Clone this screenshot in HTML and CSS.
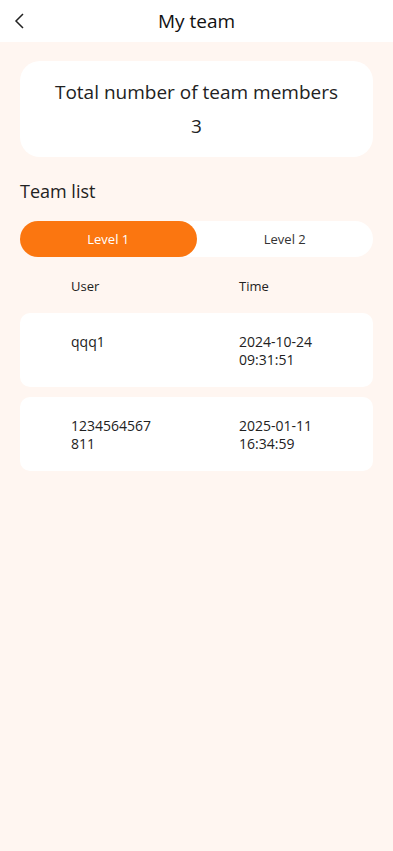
FILE: index.html
```html
<!DOCTYPE html>
<html lang="en">
<head>
    <meta charset="UTF-8">
    <meta name="viewport" content="width=device-width, initial-scale=1.0">
    <title>My team</title>
    <link rel="stylesheet" href="styles.css">
</head>
<body>
    <!-- Cabecera -->
    <div class="nav-bar">
        <span class="back">
            <svg width="12" height="18" viewBox="0 0 12 18"><path d="M9 2 L2 9 L9 16" fill="none" stroke="#222" stroke-width="1.5"/></svg>
        </span>
        <h1>My team</h1>
    </div>

    <div class="page">
        <div class="total-card">
            <p class="total-label">Total number of team members</p>
            <p class="total-num">3</p>
        </div>

        <h2 class="section-title">Team list</h2>

        <div class="tabs">
            <div class="tab active">Level 1</div>
            <div class="tab">Level 2</div>
        </div>

        <div class="list-head">
            <span class="col-user">User</span>
            <span class="col-time">Time</span>
        </div>

        <div class="row">
            <span class="col-user">qqq1</span>
            <span class="col-time">2024-10-24 09:31:51</span>
        </div>
        <div class="row">
            <span class="col-user">1234564567811</span>
            <span class="col-time">2025-01-11 16:34:59</span>
        </div>
    </div>
</body>
</html>
```

FILE: styles.css
```css
/* Estilo general */
body {
    margin: 0;
    font-family: "Open Sans", "Noto Sans", sans-serif;
    background: #fff6f1;
    color: #222;
    min-height: 100vh;
}

/* Cabecera */
.nav-bar {
    background: #fff;
    height: 42px;
    display: flex;
    align-items: center;
    justify-content: center;
    position: relative;
}

.nav-bar h1 {
    margin: 0;
    font-size: 19px;
    font-weight: 400;
    color: #111;
}

.back {
    position: absolute;
    left: 14px;
    top: 12px;
    display: flex;
}

.page {
    padding: 19px 20px;
}

/* Tarjeta total */
.total-card {
    background: #fff;
    border-radius: 20px;
    height: 96px;
    display: flex;
    flex-direction: column;
    align-items: center;
    justify-content: center;
    gap: 8px;
}

.total-card p {
    margin: 0;
    font-size: 19px;
    line-height: 26px;
    color: #222;
}

.section-title {
    margin: 20px 0 16px;
    font-size: 18px;
    font-weight: 400;
    line-height: 28px;
}

/* Pestañas */
.tabs {
    display: flex;
    background: #fff;
    border-radius: 18px;
    height: 36px;
}

.tab {
    flex: 1;
    display: flex;
    align-items: center;
    justify-content: center;
    font-size: 13px;
    color: #333;
    border-radius: 18px;
}

.tab.active {
    background: #fb7610;
    color: #fff;
}

/* Lista */
.list-head,
.row {
    display: flex;
    padding-left: 51px;
    font-size: 13px;
    line-height: 18px;
}

.list-head {
    padding-top: 20px;
    padding-bottom: 18px;
}

.row {
    background: #fff;
    border-radius: 10px;
    height: 74px;
    box-sizing: border-box;
    padding-top: 20px;
    margin-bottom: 10px;
    font-size: 14px;
}

.col-user {
    width: 168px;
}

.row .col-user {
    word-break: break-all;
    padding-right: 84px;
    box-sizing: border-box;
}

.col-time {
    width: 84px;
}
```
